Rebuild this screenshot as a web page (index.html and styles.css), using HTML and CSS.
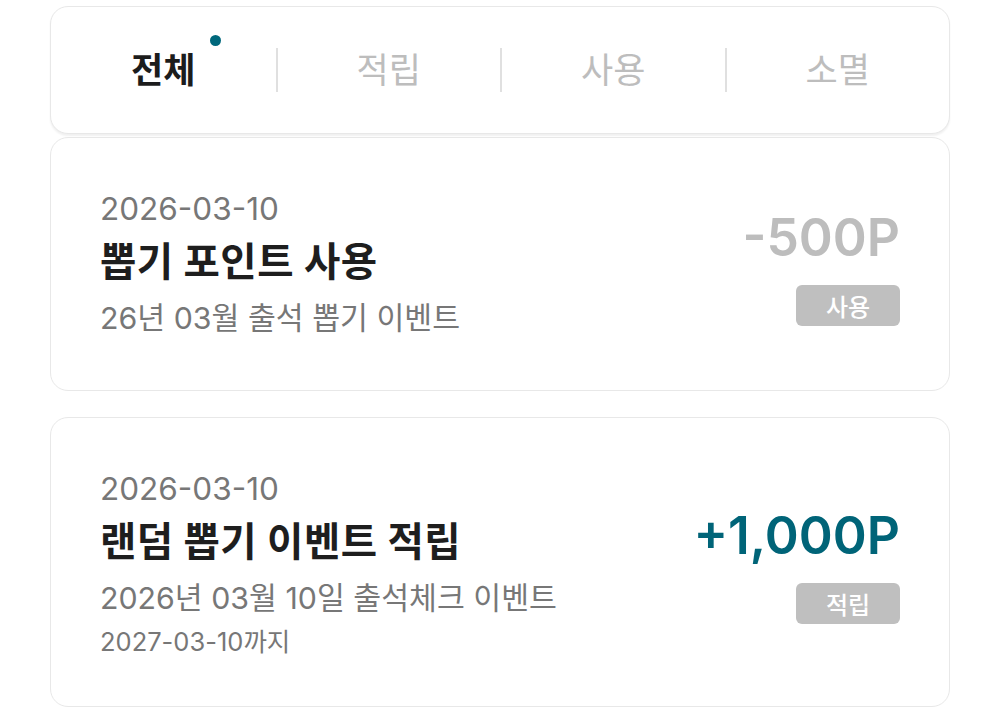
FILE: index.html
```html
<!DOCTYPE html>
<html lang="ko">
<head>
<meta charset="utf-8">
<link rel="stylesheet" href="styles.css">
</head>
<body>
<div class="page">
  <nav class="tabs">
    <div class="tab active"><span class="tab-label">전체<span class="dot"></span></span></div>
    <div class="tab"><span class="tab-label">적립</span></div>
    <div class="tab"><span class="tab-label">사용</span></div>
    <div class="tab"><span class="tab-label">소멸</span></div>
  </nav>

  <div class="card">
    <div class="info">
      <div class="date">2026-03-10</div>
      <div class="title">뽑기 포인트 사용</div>
      <div class="desc">26년 03월 출석 뽑기 이벤트</div>
    </div>
    <div class="side">
      <div class="amount used">-500P</div>
      <div class="badge">사용</div>
    </div>
  </div>

  <div class="card">
    <div class="info">
      <div class="date">2026-03-10</div>
      <div class="title">랜덤 뽑기 이벤트 적립</div>
      <div class="desc">2026년 03월 10일 출석체크 이벤트</div>
      <div class="expire">2027-03-10까지</div>
    </div>
    <div class="side">
      <div class="amount earned">+1,000P</div>
      <div class="badge">적립</div>
    </div>
  </div>
</div>
</body>
</html>
```

FILE: styles.css
```css
* { box-sizing: border-box; }
html, body { margin: 0; padding: 0; background: #fff; }
body {
  font-family: "Inter", "Noto Sans CJK KR", sans-serif;
  color: #222;
}
.page {
  padding: 6px 50px 0;
}
.tabs {
  display: grid;
  grid-template-columns: repeat(4, 1fr);
  align-items: center;
  height: 128px;
  border: 1px solid #e8e8e8;
  border-radius: 18px;
  background: #fff;
  box-shadow: 0 2px 2px rgba(0,0,0,0.06);
  margin-bottom: 3px;
}
.tab {
  display: flex;
  justify-content: center;
  align-items: center;
  height: 44px;
  border-left: 2px solid #e0e0e0;
}
.tab:first-child { border-left: none; }
.tab-label {
  position: relative;
  font-size: 35px;
  color: #bdbdbd;
  line-height: 44px;
}
.tab.active .tab-label {
  color: #1c1c1c;
  font-weight: 700;
}
.dot {
  position: absolute;
  right: -26px;
  top: -13px;
  width: 11px;
  height: 11px;
  border-radius: 50%;
  background: #00687c;
}
.card {
  display: flex;
  justify-content: space-between;
  align-items: center;
  border: 1px solid #e8e8e8;
  border-radius: 18px;
  padding: 48px 49px 46px;
  margin-bottom: 26px;
}
.date {
  font-size: 31.5px;
  line-height: 46px;
  color: #777;
}
.title {
  font-size: 39.5px;
  line-height: 60px;
  font-weight: 700;
  letter-spacing: 0.5px;
  color: #1e1e1e;
}
.desc {
  font-size: 30.3px;
  line-height: 52px;
  color: #777;
}
.expire {
  font-size: 25.5px;
  line-height: 36px;
  color: #777;
}
.side {
  display: flex;
  flex-direction: column;
  align-items: flex-end;
  gap: 22px;
  padding-top: 6px;
}
.amount {
  font-size: 51.5px;
  line-height: 52px;
  font-weight: 600;
}
.amount.used { color: #bdbdbd; }
.amount.earned { color: #006478; }
.badge {
  width: 104px;
  height: 41px;
  border-radius: 6px;
  background: #bfbfbf;
  color: #fff;
  font-size: 24px;
  font-weight: 500;
  display: flex;
  align-items: center;
  justify-content: center;
}
```
